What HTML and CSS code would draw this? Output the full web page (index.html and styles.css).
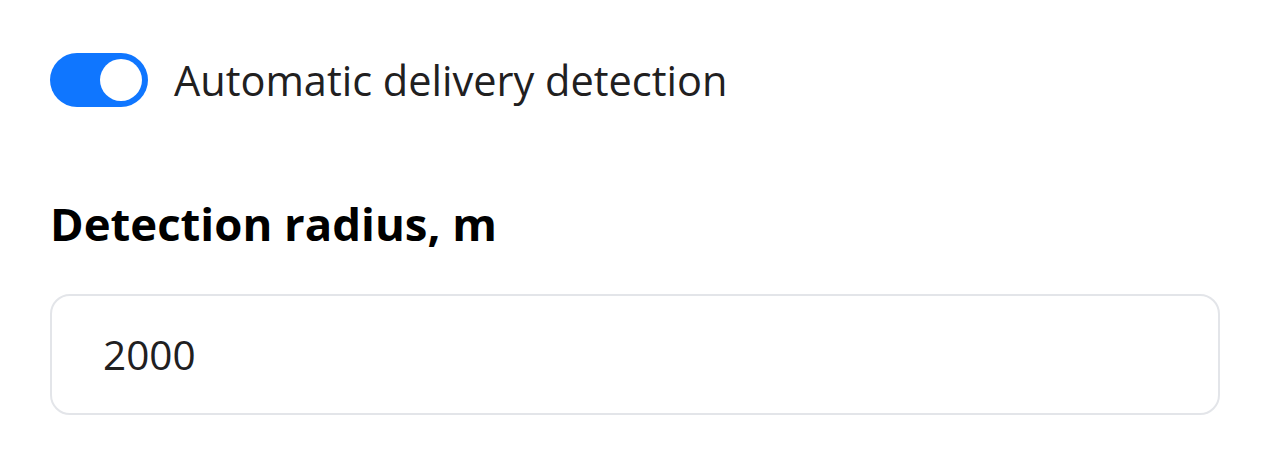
FILE: index.html
```html
<!DOCTYPE html>
<html lang="en">
<head>
    <meta charset="UTF-8">
    <title>Delivery settings</title>
    <link rel="stylesheet" href="styles.css">
</head>
<body>
    <div class="settings">
        <label class="switch-row">
            <span class="switch"><span class="knob"></span></span>
            <span class="switch-label">Automatic delivery detection</span>
        </label>
        <h2 class="field-title">Detection radius, m</h2>
        <div class="field">2000</div>
    </div>
</body>
</html>
```

FILE: styles.css
```css
*{
    margin: 0px;
    box-sizing: border-box;
}
body{
    background-color: white;
    font-family: "Open Sans", "Liberation Sans", sans-serif;
    color: #21201f;
}
.settings{
    padding: 53px 60px 0px 50px;
}
.switch-row{
    display: flex;
    align-items: center;
    gap: 26px;
}
.switch{
    width: 98px;
    height: 54px;
    border-radius: 27px;
    background-color: #0f76ff;
    display: flex;
    align-items: center;
    justify-content: flex-end;
    padding: 0px 6px;
}
.knob{
    width: 42px;
    height: 42px;
    border-radius: 50%;
    background-color: white;
}
.switch-label{
    font-size: 41.5px;
    line-height: 54px;
    color: #21201f;
}
.field-title{
    font-size: 45.5px;
    line-height: 60px;
    font-weight: bold;
    color: black;
    margin-top: 86px;
    margin-bottom: 41px;
}
.field{
    height: 121px;
    border: 2px solid #e3e5e9;
    border-radius: 20px;
    display: flex;
    align-items: center;
    padding-left: 51px;
    font-size: 40.5px;
}
```
